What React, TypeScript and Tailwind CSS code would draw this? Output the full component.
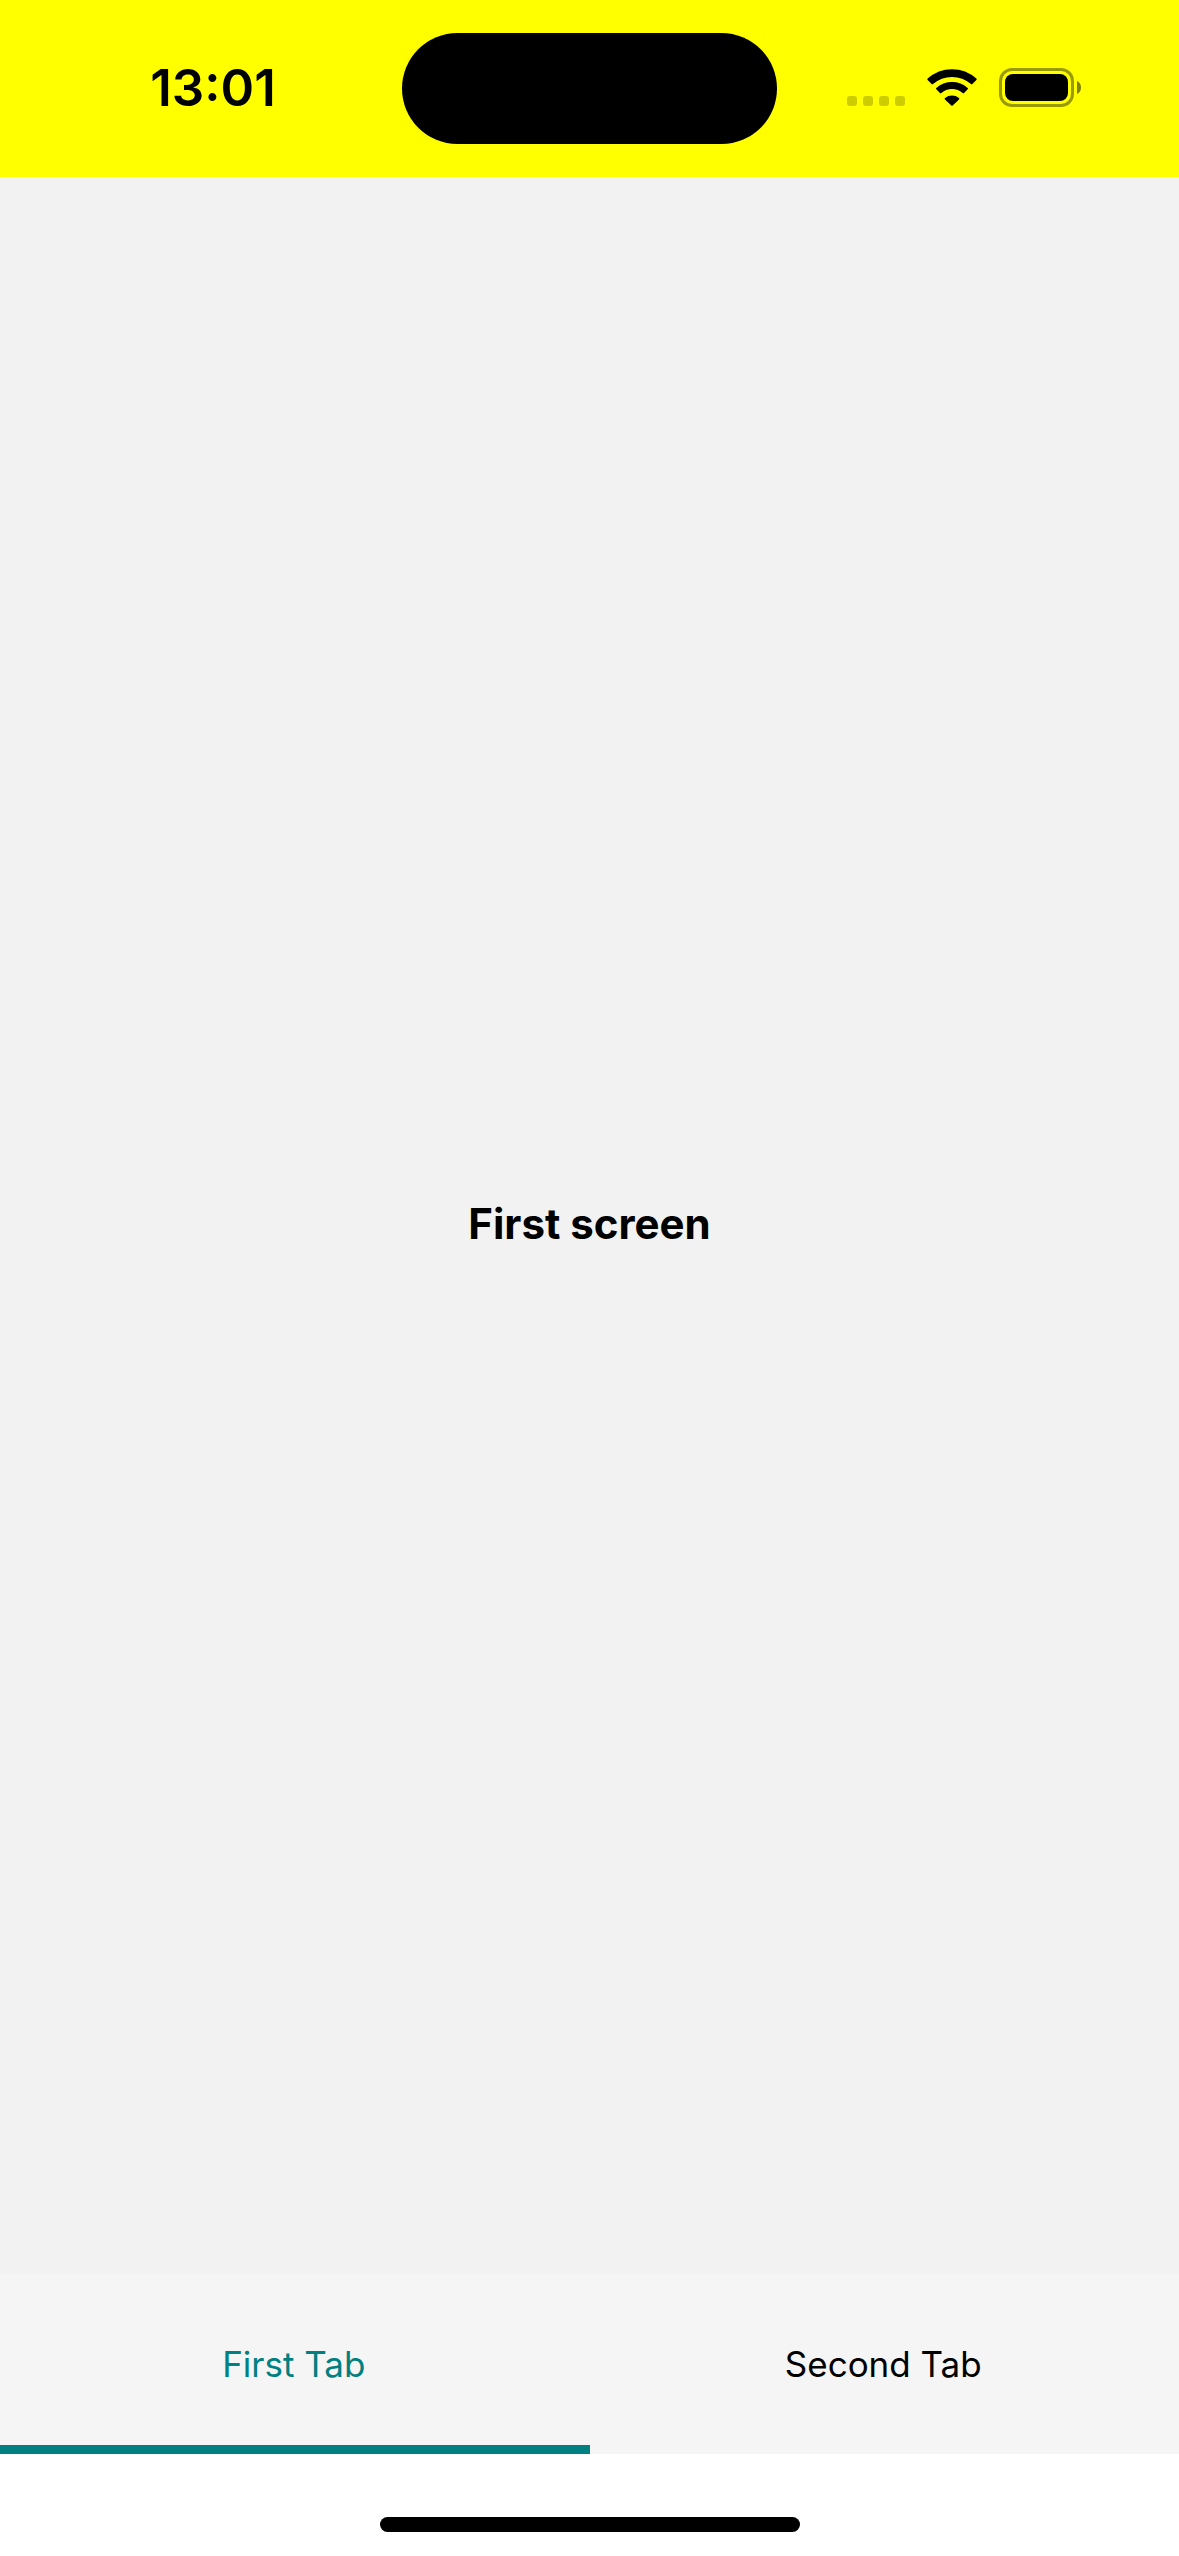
function CellularDots() {
  return (
    <svg className="h-[40px] w-[58px]" viewBox="0 0 58 40" fill="#000" fillOpacity="0.2" aria-hidden="true">
      <rect x="0" y="28" width="10" height="10" rx="3" />
      <rect x="16" y="28" width="10" height="10" rx="3" />
      <rect x="32" y="28" width="10" height="10" rx="3" />
      <rect x="48" y="28" width="10" height="10" rx="3" />
    </svg>
  );
}

function WifiIcon() {
  return (
    <svg
      className="h-[40px] w-[50px]"
      viewBox="0 -2 150 120"
      fill="#000"
      stroke="#000"
      strokeWidth="6"
      strokeLinejoin="round"
      aria-hidden="true"
    >
      <path d="M4 32A106 106 0 0 1 146 32L134 44A89 89 0 0 0 16 44Z" />
      <path d="M30 60A68 68 0 0 1 120 60L109 71A51 51 0 0 0 41 71Z" />
      <path d="M56 90A30 30 0 0 1 94 90L75 108Z" />
    </svg>
  );
}

function BatteryIcon() {
  return (
    <svg className="h-[40px] w-[82px]" viewBox="0 0 82 40" aria-hidden="true">
      <rect x="1.5" y="1.5" width="72" height="36" rx="11.5" fill="none" stroke="#000" strokeOpacity="0.4" strokeWidth="3" />
      <path d="M78 13C80.5 14 82 16.5 82 19.5S80.5 25 78 26Z" fillOpacity="0.5" />
      <rect x="6" y="6" width="63" height="27" rx="8" />
    </svg>
  );
}

export default function App() {
  return (
    <div className="flex min-h-screen flex-col bg-white font-[Inter,sans-serif] text-black">
      <header className="grid h-[177px] grid-cols-[1fr_375px_1fr] items-center bg-[#ffff00]">
        <time className="justify-self-center pl-6 text-[51px] font-semibold">13:01</time>
        <div className="h-[111px] rounded-full bg-black" />
        <div className="flex h-[41px] justify-end gap-[22px] pr-[98px]">
          <CellularDots />
          <WifiIcon />
          <BatteryIcon />
        </div>
      </header>
      <main className="flex flex-1 items-center justify-center bg-[#f2f2f2] pb-1">
        <h1 className="text-[42px] font-bold">First screen</h1>
      </main>
      <nav className="grid h-[180px] grid-cols-2 bg-[#f5f5f5] text-[35px]">
        <button className="pr-0.5 text-[#008080] shadow-[inset_0_-9px_0_#008080]">First Tab</button>
        <button className="pr-0.5">Second Tab</button>
      </nav>
      <footer className="flex h-[102px] items-end justify-center pb-6">
        <div className="h-[15px] w-[420px] rounded-full bg-black" />
      </footer>
    </div>
  );
}
